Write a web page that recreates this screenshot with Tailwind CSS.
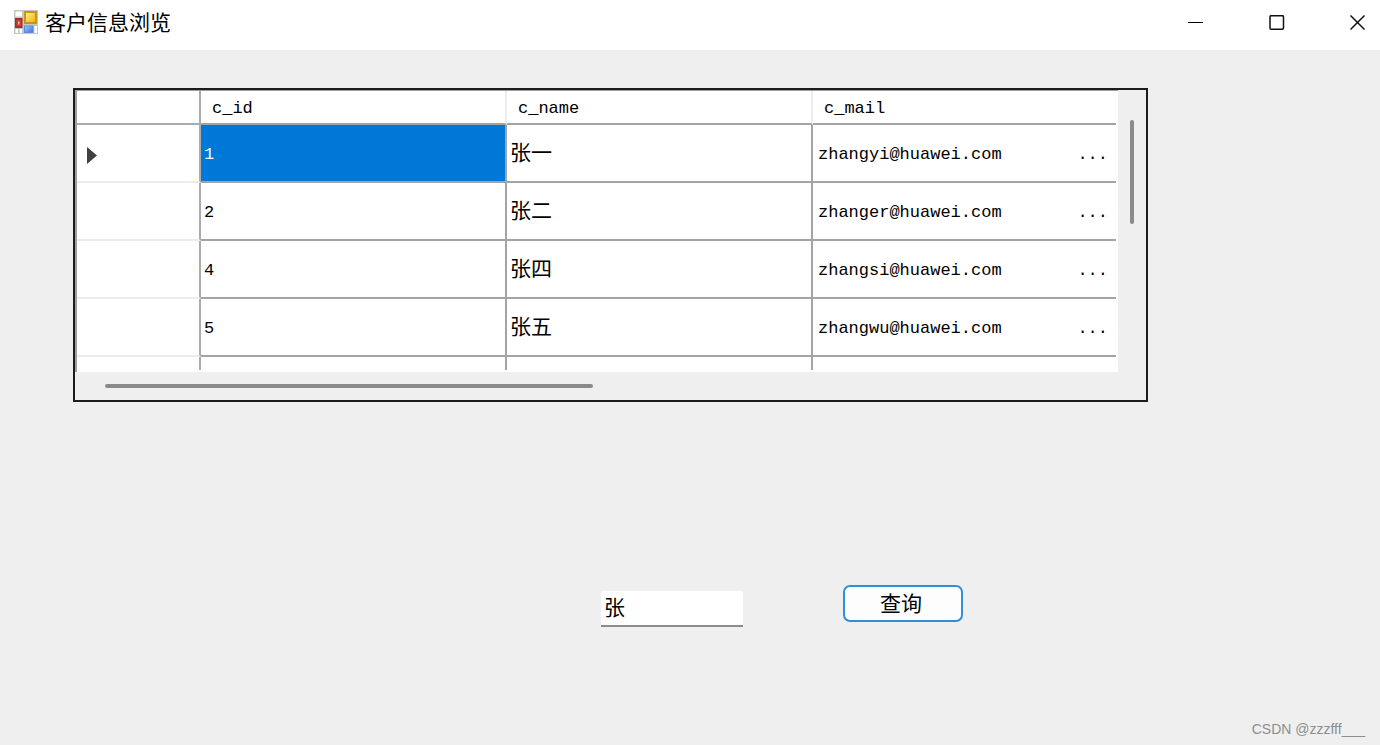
<!DOCTYPE html>
<html lang="zh-CN">
<head>
<meta charset="utf-8">
<meta name="viewport" content="width=device-width, initial-scale=1">
<title>客户信息浏览</title>
<script src="https://cdn.jsdelivr.net/npm/@tailwindcss/browser@4"></script>
</head>
<body class="flex min-h-screen flex-col bg-[#efefef] font-['Liberation_Sans','Noto_Sans_CJK_SC',sans-serif] text-black">
<header class="flex h-[50px] shrink-0 items-center bg-white pb-1 pl-[13px]">
  <svg class="mb-[2px] h-[26px] w-[26px]" viewBox="0 0 26 26" aria-hidden="true">
    <defs>
      <linearGradient id="gold" x1="0" y1="0" x2="1" y2="1"><stop offset="0" stop-color="#ffe9a0"/><stop offset="1" stop-color="#f3b400"/></linearGradient>
      <linearGradient id="blue" x1="0" y1="0" x2="1" y2="1"><stop offset="0" stop-color="#9cc4fb"/><stop offset="1" stop-color="#3b78e0"/></linearGradient>
    </defs>
    <rect x="1" y="1" width="24" height="24" fill="#c6c6c6"/>
    <path d="M2.500 2.500h6.500v5H2.500zM2.500 20h2.500v4H2.500zM6.500 20h2.500v4H6.500zM21.500 17h2.500v7h-2.500z" fill="#fff"/>
    <rect x="2" y="9" width="7.500" height="10" fill="#a92a26"/>
    <rect x="3.500" y="11" width="4.500" height="6" fill="#cf4038"/>
    <rect x="5" y="12.500" width="1.500" height="3" fill="#f3b0a6"/>
    <rect x="11" y="2" width="13" height="13" fill="#c8951c"/>
    <rect x="13" y="4" width="9" height="9" fill="url(#gold)"/>
    <rect x="11" y="16.500" width="9.500" height="7.500" fill="#5c8ce0"/>
    <rect x="12" y="17.500" width="7.500" height="5.500" fill="url(#blue)"/>
  </svg>
  <h1 class="ml-[6px] text-[21px] leading-7">客户信息浏览</h1>
  <div class="ml-auto flex gap-[49px] pr-[6px]">
    <button type="button" aria-label="最小化" class="h-8 w-8"><svg class="mx-auto h-4 w-4" viewBox="0 0 16 16"><path d="M0 7.500h15" stroke="#000" fill="none"/></svg></button>
    <button type="button" aria-label="最大化" class="h-8 w-8"><svg class="mx-auto h-4 w-4" viewBox="0 0 16 16"><rect x="1" y=".7" width="13.500" height="13.500" rx="1.200" stroke="#111" stroke-width="1.500" fill="none"/></svg></button>
    <button type="button" aria-label="关闭" class="h-8 w-8"><svg class="mx-auto h-4 w-4" viewBox="0 0 16 16"><path d="M.5 .5l14 14M14.500 .5l-14 14" stroke="#111" stroke-width="1.500" fill="none"/></svg></button>
  </div>
</header>

<main class="flex flex-1 flex-col">
  <section class="mt-[38px] mr-[232px] ml-[73px] grid grid-cols-[1fr_28px] grid-rows-[auto_28px] border-2 border-[#1c1c1c]">
    <div class="overflow-hidden border-t border-l-2 border-[#a0a0a0] bg-white pr-[2px] pb-[2px]">
      <table class="w-full table-fixed border-separate border-spacing-0 text-left font-['Liberation_Mono','Noto_Sans_CJK_SC',monospace] text-[17px] leading-6">
        <colgroup><col class="w-[124px]"><col class="w-[306px]"><col class="w-[306px]"><col></colgroup>
        <thead>
          <tr class="h-[34px]">
            <td class="border-r-2 border-b-2 border-[#ababab]"></td>
            <th scope="col" class="border-r-2 border-b-2 border-r-[#ececec] border-b-[#a4a4a4] pt-1 pl-[11px] font-normal">c_id</th>
            <th scope="col" class="border-r-2 border-b-2 border-r-[#ececec] border-b-[#a4a4a4] pt-1 pl-[11px] font-normal">c_name</th>
            <th scope="col" class="border-b-2 border-[#a4a4a4] pt-1 pl-[11px] font-normal">c_mail</th>
          </tr>
        </thead>
        <tbody>
          <tr class="h-[58px]">
            <td class="border-r-2 border-b-2 border-r-[#ababab] border-b-[#ececec] pl-[10px]"><svg class="mt-1 h-[17px] w-[10px]" viewBox="0 0 10 17" aria-label="当前行"><path d="M0 0v17l10-8.500z" fill="#404040"/></svg></td>
            <td class="border-r-2 border-b-2 border-[#a4a4a4] bg-[#0078d7] pt-1 pl-[3px] text-white">1</td>
            <td class="border-r-2 border-b-2 border-[#a4a4a4] pt-1 pl-[3px] text-[21px]">张一</td>
            <td class="border-b-2 border-[#a4a4a4] pt-1 pr-2 pl-[5px]"><div class="flex justify-between"><span>zhangyi@huawei.com</span><span>...</span></div></td>
          </tr>
          <tr class="h-[58px]">
            <td class="border-r-2 border-b-2 border-r-[#ababab] border-b-[#ececec]"></td>
            <td class="border-r-2 border-b-2 border-[#a4a4a4] pt-1 pl-[3px]">2</td>
            <td class="border-r-2 border-b-2 border-[#a4a4a4] pt-1 pl-[3px] text-[21px]">张二</td>
            <td class="border-b-2 border-[#a4a4a4] pt-1 pr-2 pl-[5px]"><div class="flex justify-between"><span>zhanger@huawei.com</span><span>...</span></div></td>
          </tr>
          <tr class="h-[58px]">
            <td class="border-r-2 border-b-2 border-r-[#ababab] border-b-[#ececec]"></td>
            <td class="border-r-2 border-b-2 border-[#a4a4a4] pt-1 pl-[3px]">4</td>
            <td class="border-r-2 border-b-2 border-[#a4a4a4] pt-1 pl-[3px] text-[21px]">张四</td>
            <td class="border-b-2 border-[#a4a4a4] pt-1 pr-2 pl-[5px]"><div class="flex justify-between"><span>zhangsi@huawei.com</span><span>...</span></div></td>
          </tr>
          <tr class="h-[58px]">
            <td class="border-r-2 border-b-2 border-r-[#ababab] border-b-[#ececec]"></td>
            <td class="border-r-2 border-b-2 border-[#a4a4a4] pt-1 pl-[3px]">5</td>
            <td class="border-r-2 border-b-2 border-[#a4a4a4] pt-1 pl-[3px] text-[21px]">张五</td>
            <td class="border-b-2 border-[#a4a4a4] pt-1 pr-2 pl-[5px]"><div class="flex justify-between"><span>zhangwu@huawei.com</span><span>...</span></div></td>
          </tr>
          <tr class="h-[13px]">
            <td class="border-r-2 border-[#ababab]"></td>
            <td class="border-r-2 border-[#a4a4a4]"></td>
            <td class="border-r-2 border-[#a4a4a4]"></td>
            <td></td>
          </tr>
        </tbody>
      </table>
    </div>
    <div class="flex justify-center pt-[30px]"><div class="h-[104px] w-[4px] rounded-sm bg-[#8a8a8a]"></div></div>
    <div class="flex items-center pl-[30px]"><div class="h-[4px] w-[488px] rounded-sm bg-[#8a8a8a]"></div></div>
  </section>

  <form class="mt-[183px] flex items-start gap-[100px] pl-[601px]">
    <input type="text" value="张" aria-label="客户姓名" class="mt-[6px] h-[36px] w-[142px] border-b-2 border-[#8c8c8c] bg-white px-[3px] pb-1 text-[21px] leading-7 outline-none">
    <button type="button" class="h-[37px] w-[120px] rounded-[7px] border-2 border-[#2e8fdd] bg-[#fdfdfd] pr-1 text-[21px] leading-8 font-normal">查询</button>
  </form>
  <p class="mt-auto pr-[15px] pb-[6px] text-right text-[14px] leading-5 text-[#8e8e8e]">CSDN @zzzfff___</p>
</main>
</body>
</html>
